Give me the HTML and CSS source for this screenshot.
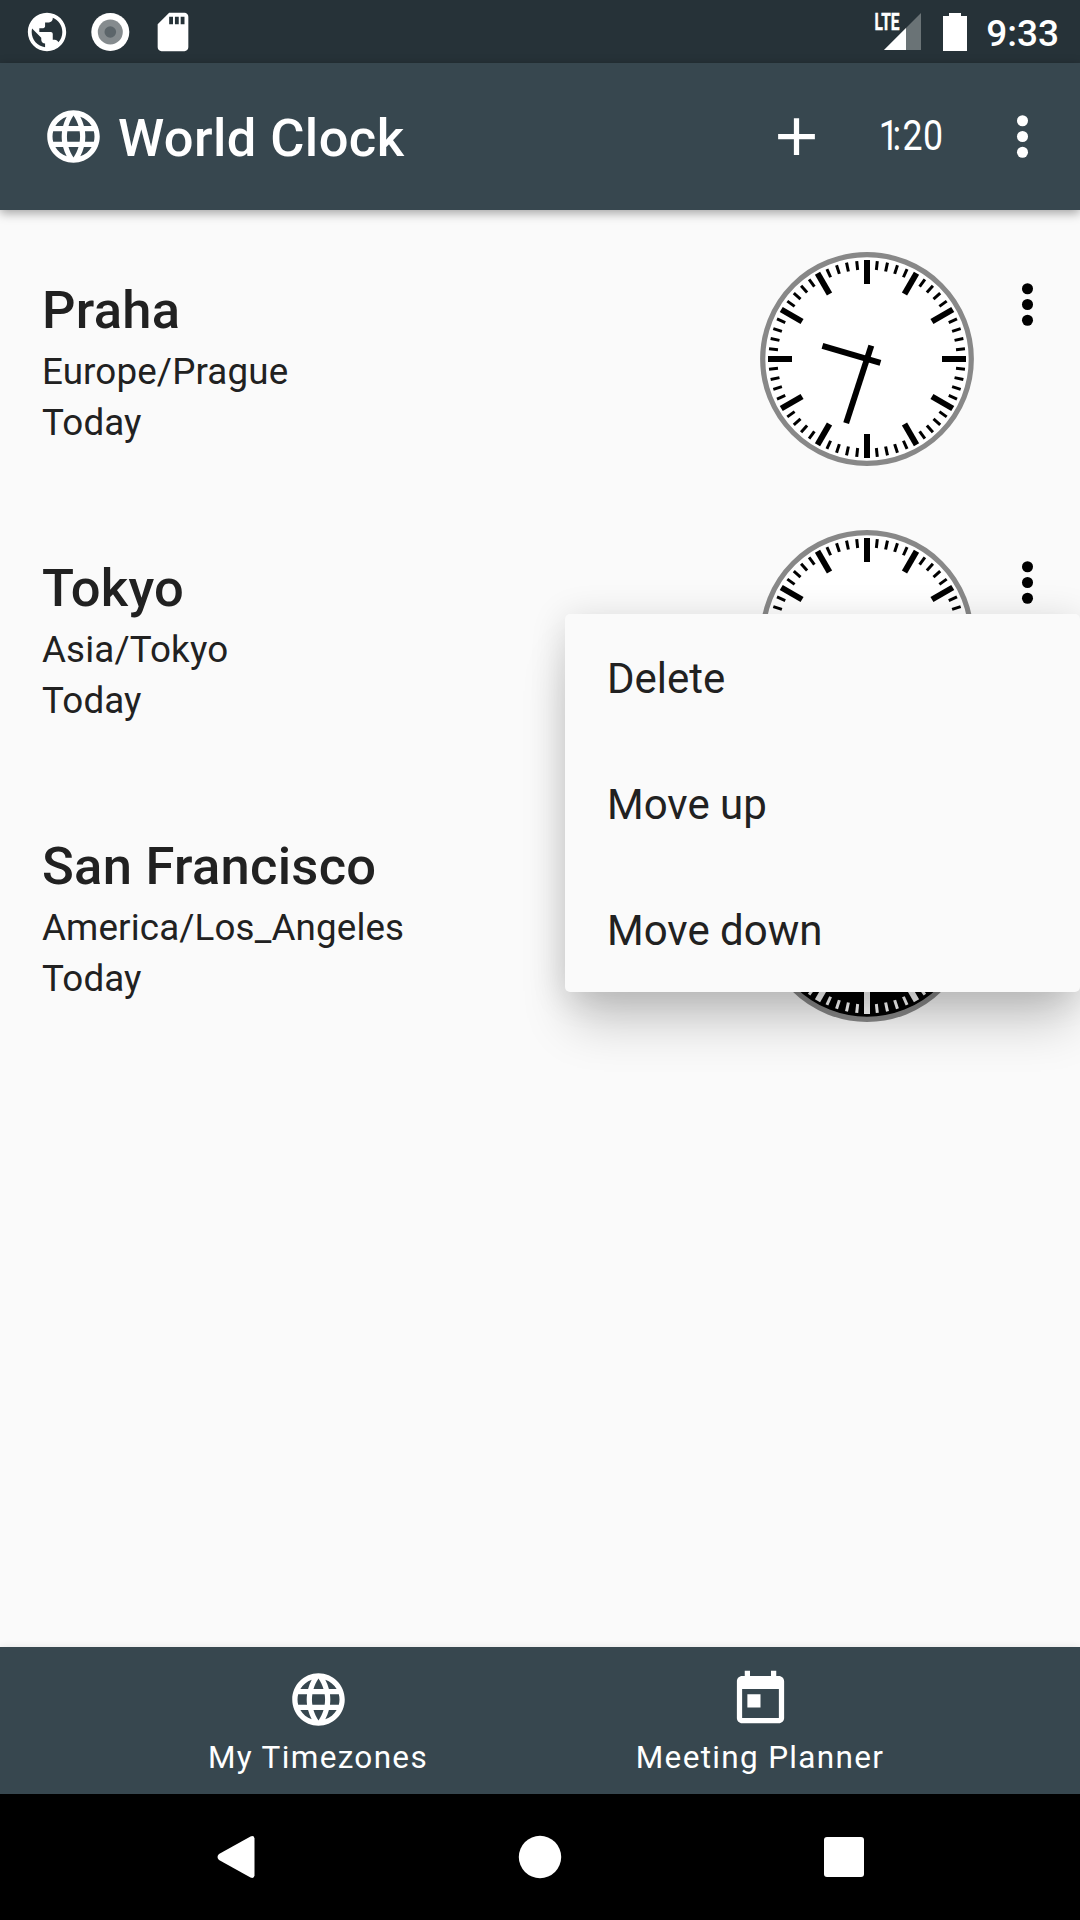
FILE: index.html
```html
<!DOCTYPE html>
<html lang="en">
<head>
<meta charset="utf-8">
<title>World Clock</title>
<link rel="stylesheet" href="styles.css">
</head>
<body>
<svg class="defs" aria-hidden="true">
  <defs>
    <symbol id="language" viewBox="0 0 24 24"><path d="M11.99 2C6.47 2 2 6.48 2 12s4.47 10 9.99 10C17.52 22 22 17.52 22 12S17.52 2 11.99 2zm6.93 6h-2.95c-.32-1.25-.78-2.45-1.38-3.56 1.84.63 3.37 1.91 4.33 3.56zM12 4.04c.83 1.2 1.48 2.53 1.91 3.96h-3.82c.43-1.43 1.08-2.76 1.91-3.96zM4.26 14C4.1 13.36 4 12.69 4 12s.1-1.36.26-2h3.38c-.08.66-.14 1.32-.14 2s.06 1.34.14 2H4.26zm.82 2h2.95c.32 1.25.78 2.45 1.38 3.56-1.84-.63-3.37-1.9-4.33-3.56zm2.95-8H5.08c.96-1.66 2.49-2.93 4.33-3.56C8.81 5.55 8.35 6.75 8.03 8zM12 19.96c-.83-1.2-1.48-2.53-1.91-3.96h3.82c-.43 1.43-1.08 2.76-1.91 3.96zM14.34 14H9.66c-.09-.66-.16-1.32-.16-2s.07-1.35.16-2h4.68c.09.65.16 1.32.16 2s-.07 1.34-.16 2zm.25 5.56c.6-1.11 1.06-2.31 1.38-3.56h2.95c-.96 1.65-2.49 2.93-4.33 3.56zM16.36 14c.08-.66.14-1.32.14-2s-.06-1.34-.14-2h3.38c.16.64.26 1.31.26 2s-.1 1.36-.26 2h-3.38z"/></symbol>
    <symbol id="more" viewBox="0 0 24 24"><circle cx="12" cy="6" r="2.1"/><circle cx="12" cy="12" r="2.1"/><circle cx="12" cy="18" r="2.1"/></symbol>
    <g id="sector" stroke="currentColor">
      <path stroke-width="6" d="M0-99V-75"/>
      <g stroke-width="3">
        <path d="M0-98.5V-89.5" transform="rotate(6)"/>
        <path d="M0-98.5V-89.5" transform="rotate(12)"/>
        <path d="M0-98.5V-89.5" transform="rotate(18)"/>
        <path d="M0-98.5V-89.5" transform="rotate(24)"/>
      </g>
    </g>
    <symbol id="dial" viewBox="-107 -107 214 214">
      <circle class="dial-face" r="104.3"/>
      <use href="#sector"/>
      <use href="#sector" transform="rotate(30)"/>
      <use href="#sector" transform="rotate(60)"/>
      <use href="#sector" transform="rotate(90)"/>
      <use href="#sector" transform="rotate(120)"/>
      <use href="#sector" transform="rotate(150)"/>
      <use href="#sector" transform="rotate(180)"/>
      <use href="#sector" transform="rotate(210)"/>
      <use href="#sector" transform="rotate(240)"/>
      <use href="#sector" transform="rotate(270)"/>
      <use href="#sector" transform="rotate(300)"/>
      <use href="#sector" transform="rotate(330)"/>
    </symbol>
  </defs>
</svg>

<div class="screen">
  <header class="status-bar">
    <div class="status-group notifications">
      <svg class="status-icon" viewBox="0 0 24 24"><path d="M12 2C6.480 2 2 6.480 2 12s4.480 10 10 10 10-4.480 10-10S17.520 2 12 2zm-1 17.930c-3.950-.49-7-3.850-7-7.930 0-.62.080-1.210.21-1.790L9 15v1c0 1.100.9 2 2 2v1.930zm6.900-2.540c-.26-.81-1-1.390-1.900-1.390h-1v-3c0-.55-.45-1-1-1H8v-2h2c.55 0 1-.45 1-1V7h2c1.100 0 2-.9 2-2v-.41c2.930 1.190 5 4.060 5 7.410 0 2.080-.8 3.970-2.100 5.390z"/></svg>
      <svg class="status-icon" viewBox="0 0 46 46"><circle cx="23.3" cy="23" r="19"/><circle class="ring-mid" cx="23.3" cy="23" r="12.5"/><circle class="ring-core" cx="23.3" cy="23" r="5.8"/></svg>
      <svg class="status-icon" viewBox="0 0 24 24"><path d="M18 2h-8L4 8v12c0 1.100.9 2 2 2h12c1.100 0 2-.9 2-2V4c0-1.100-.9-2-2-2zm-6 6h-2V4h2v4zm3 0h-2V4h2v4zm3 0h-2V4h2v4z"/></svg>
    </div>
    <div class="status-group">
      <svg class="signal" viewBox="0 0 47 39"><path class="signal-off" d="M46 1V38H9z"/><path d="M31 16V38H9z"/><text class="lte" x="-0.5" y="18" textLength="25" lengthAdjust="spacingAndGlyphs">LTE</text></svg>
      <svg class="battery" viewBox="0 0 24 38"><path d="M6 0h12v3h6v35H0V3h6z"/></svg>
      <span class="status-time">9:33</span>
    </div>
  </header>

  <div class="app-bar">
    <svg class="icon" viewBox="0 0 24 24"><use href="#language"/></svg>
    <h1 class="app-title">World Clock</h1>
    <div class="actions">
      <svg class="icon" viewBox="0 0 24 24"><path d="M19 13h-6v6h-2v-6H5v-2h6V5h2v6h6v2z"/></svg>
      <svg class="time-toggle" viewBox="0 0 63 63"><text class="toggle-text" x="0.85 17.1 28.7 52.9" y="45.2" transform="scale(.85 1)">1:20</text></svg>
      <svg class="icon" viewBox="0 0 24 24"><use href="#more"/></svg>
    </div>
  </div>

  <main class="zones">
    <section class="zone">
      <div class="zone-text">
        <h2 class="city">Praha</h2>
        <p class="detail">Europe/Prague</p>
        <p class="detail">Today</p>
      </div>
      <svg class="clock" viewBox="-107 -107 214 214"><use href="#dial" x="-107" y="-107" width="214" height="214"/><path class="hand" d="M0 14V-46.500" transform="rotate(286.500)"/><path class="hand" d="M0 14V-67.500" transform="rotate(198)"/></svg>
      <svg class="icon zone-more" viewBox="0 0 24 24"><use href="#more"/></svg>
    </section>
    <section class="zone">
      <div class="zone-text">
        <h2 class="city">Tokyo</h2>
        <p class="detail">Asia/Tokyo</p>
        <p class="detail">Today</p>
      </div>
      <svg class="clock" viewBox="-107 -107 214 214"><use href="#dial" x="-107" y="-107" width="214" height="214"/><path class="hand" d="M0 14V-46.500" transform="rotate(136.500)"/><path class="hand" d="M0 14V-67.500" transform="rotate(198)"/></svg>
      <svg class="icon zone-more" viewBox="0 0 24 24"><use href="#more"/></svg>
    </section>
    <section class="zone">
      <div class="zone-text">
        <h2 class="city">San Francisco</h2>
        <p class="detail">America/Los_Angeles</p>
        <p class="detail">Today</p>
      </div>
      <svg class="clock night" viewBox="-107 -107 214 214"><use href="#dial" x="-107" y="-107" width="214" height="214"/><path class="hand" d="M0 14V-46.500" transform="rotate(16.500)"/><path class="hand" d="M0 14V-67.500" transform="rotate(198)"/></svg>
      <svg class="icon zone-more" viewBox="0 0 24 24"><use href="#more"/></svg>
    </section>
  </main>

  <nav class="tabs">
    <div class="tab">
      <svg class="icon" viewBox="0 0 24 24"><use href="#language"/></svg>
      <span class="tab-label">My Timezones</span>
    </div>
    <div class="tab">
      <svg class="icon" viewBox="0 0 24 24"><path d="M19 3h-1V1h-2v2H8V1H6v2H5c-1.110 0-1.990.9-1.990 2L3 19c0 1.100.89 2 2 2h14c1.100 0 2-.9 2-2V5c0-1.100-.9-2-2-2zm0 16H5V8h14v11zM7 10h5v5H7z"/></svg>
      <span class="tab-label">Meeting Planner</span>
    </div>
  </nav>

  <footer class="system-nav">
    <svg class="nav-icon" viewBox="0 0 44 44"><path d="M36.500 1.500Q40 0 40.500 3.500V40.500Q40 44 36.500 42.500L5 25Q2 22 5 19z"/></svg>
    <svg class="nav-icon" viewBox="0 0 44 44"><circle cx="22" cy="22" r="21.200"/></svg>
    <svg class="nav-icon" viewBox="0 0 44 44"><rect x="2" y="2" width="40" height="40" rx="3"/></svg>
  </footer>

  <div class="popup">
    <div class="popup-item">Delete</div>
    <div class="popup-item">Move up</div>
    <div class="popup-item">Move down</div>
  </div>
</div>
</body>
</html>
```
FILE: styles.css
```css
* {
  box-sizing: border-box;
  margin: 0;
}

body {
  background: #fafafa;
  color: #212121;
  font-family: Roboto, "Liberation Sans", sans-serif;
}

svg {
  display: block;
  flex: none;
  fill: currentColor;
}

.defs {
  position: absolute;
  width: 0;
  height: 0;
}

.screen {
  position: relative;
  display: flex;
  flex-direction: column;
  width: 1080px;
  height: 1920px;
  overflow: hidden;
}

.status-bar {
  display: flex;
  justify-content: space-between;
  height: 63px;
  padding: 0 21px 0 24px;
  background: #263238;
  color: #fff;
}

.status-group {
  display: flex;
  align-items: center;
}

.notifications {
  gap: 17px;
}

.status-icon {
  width: 46px;
  height: 46px;
}

.ring-mid {
  fill: #858b8e;
}

.ring-core {
  fill: #5c656a;
}

.signal {
  width: 47px;
  height: 39px;
  margin-right: 21px;
  overflow: visible;
}

.signal-off {
  fill: #6a7376;
}

.lte {
  font-size: 23px;
  font-weight: 700;
  stroke: currentColor;
  stroke-width: 0.4px;
}

.battery {
  width: 24px;
  height: 38px;
  margin-right: 19px;
}

.status-time {
  padding-top: 5px;
  font-size: 37px;
  font-weight: 500;
  line-height: 44px;
}

.app-bar {
  position: relative;
  display: flex;
  align-items: center;
  height: 147px;
  padding: 0 26px 0 42px;
  background: #37474f;
  color: #fff;
  box-shadow: 0 3px 10px rgba(0, 0, 0, 0.36);
}

.icon {
  width: 63px;
  height: 63px;
}

.app-title {
  margin-left: 13px;
  padding-top: 3px;
  font-size: 52.5px;
  font-weight: 500;
  letter-spacing: 0.4px;
  line-height: 62px;
}

.actions {
  display: flex;
  gap: 50px;
  margin-left: auto;
}

.time-toggle {
  width: 63px;
  height: 63px;
  overflow: visible;
}

.toggle-text {
  font-size: 42px;
}

.zones {
  flex: 1;
  padding-top: 10px;
}

.zone {
  display: flex;
  align-items: flex-start;
  height: 278px;
  padding: 32px 21px 0 42px;
}

.zone-text {
  flex: 1;
  padding-top: 27px;
}

.city {
  margin-bottom: 5px;
  font-size: 52.5px;
  font-weight: 500;
  letter-spacing: 0.28px;
  line-height: 62px;
}

.detail {
  font-size: 36.75px;
  letter-spacing: 0.14px;
  line-height: 51px;
}

.clock {
  width: 214px;
  height: 214px;
  color: #000;
  --face: #fff;
}

.night {
  color: #fff;
  --face: #000;
}

.dial-face {
  fill: var(--face);
  stroke: #888;
  stroke-width: 5.2px;
}

.hand {
  stroke: currentColor;
  stroke-width: 6px;
}

.zone-more {
  margin: 21px 0 0 22px;
  color: #000;
}

.tabs {
  display: flex;
  justify-content: center;
  height: 147px;
  padding-right: 2px;
  background: #37474f;
  color: #fff;
  box-shadow: 0 0 8px rgba(0, 0, 0, 0.09);
}

.tab {
  display: flex;
  flex-direction: column;
  align-items: center;
  width: 442px;
  padding-top: 21px;
}

.tab-label {
  margin-top: 8px;
  font-size: 31.5px;
  letter-spacing: 1.32px;
  line-height: 37px;
}

.system-nav {
  position: relative;
  display: flex;
  align-items: center;
  justify-content: center;
  gap: 260px;
  height: 126px;
  background: #000;
  color: #fff;
}

.nav-icon {
  width: 44px;
  height: 44px;
}

.popup {
  position: absolute;
  top: 614px;
  left: 565px;
  width: 515px;
  border-radius: 5px;
  background: #fafafa;
  box-shadow: 0 38px 48px -8px rgba(0, 0, 0, 0.2), 0 4px 36px rgba(0, 0, 0, 0.14);
}

.popup-item {
  display: flex;
  align-items: center;
  height: 126px;
  padding: 2px 42px 0;
  font-size: 42px;
}
```
